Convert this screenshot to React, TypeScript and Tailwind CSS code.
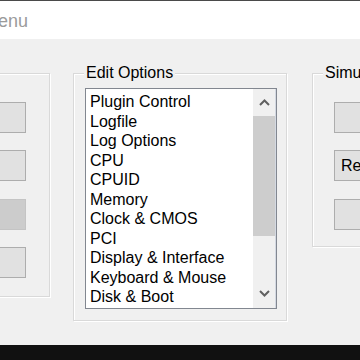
const editOptions = [
  'Plugin Control',
  'Logfile',
  'Log Options',
  'CPU',
  'CPUID',
  'Memory',
  'Clock & CMOS',
  'PCI',
  'Display & Interface',
  'Keyboard & Mouse',
  'Disk & Boot',
];

function WinButton({ label, pressed }: { label?: string; pressed?: boolean }) {
  return (
    <button
      className={
        'flex h-[31px] w-[60px] shrink-0 items-center justify-start border pl-[6px] text-[16px] leading-[19px] text-black ' +
        (pressed ? 'border-[#c4c4c4] bg-[#cccccc]' : 'border-[#adadad] bg-[#e1e1e1]')
      }
    >
      {label}
    </button>
  );
}

function GroupLabel({ children }: { children: string }) {
  return (
    <span className="absolute left-[10px] top-[-11px] bg-[#f0f0f0] px-[2px] leading-[19.5px] whitespace-nowrap">
      {children}
    </span>
  );
}

export default function App() {
  return (
    <div className="flex h-[360px] w-[360px] flex-col overflow-hidden bg-[#f0f0f0] font-['Liberation_Sans',Arial,sans-serif] text-[16px] text-black">
      <div className="h-px shrink-0 bg-[#4a4a4a]" />
      <div className="h-[38px] shrink-0 bg-white pt-[10px] text-[18px] leading-[20px] text-[#9b9b9b]">
        <span className="ml-[-17px]">Menu</span>
      </div>

      <div className="flex flex-1 items-start pt-[34px]">
        {/* left group, mostly off screen */}
        <div className="relative ml-[-30px] flex h-[224px] w-[80px] shrink-0 flex-col items-end border border-[#d9d9d9] pr-[23px] pt-[28px] shadow-[inset_1px_1px_0_#fff,1px_1px_0_#fff]">
          <WinButton />
          <div className="mt-[17px]">
            <WinButton />
          </div>
          <div className="mt-[18px]">
            <WinButton pressed />
          </div>
          <div className="mt-[17px]">
            <WinButton />
          </div>
        </div>

        {/* Edit Options */}
        <div className="relative ml-[23px] h-[248px] w-[214px] shrink-0 border border-[#d9d9d9] pl-[11px] pt-[14px] shadow-[inset_1px_1px_0_#fff,1px_1px_0_#fff]">
          <GroupLabel>Edit Options</GroupLabel>
          <div className="flex h-[221px] w-[192px] border border-[#828790] bg-white">
            <ul className="flex-1 overflow-hidden pl-[4px] pt-[3px] leading-[19.5px] whitespace-nowrap">
              {editOptions.map((item) => (
                <li key={item}>{item}</li>
              ))}
            </ul>
            <div className="flex w-[22px] shrink-0 flex-col bg-[#f0f0f0]">
              <div className="flex h-[27px] items-center justify-center">
                <svg width="11" height="7" viewBox="0 0 11 7">
                  <polyline points="1,6 5.5,1.5 10,6" fill="none" stroke="#606060" strokeWidth="2" />
                </svg>
              </div>
              <div className="h-[120px] bg-[#cdcdcd]" />
              <div className="flex-1" />
              <div className="flex h-[29px] items-center justify-center">
                <svg width="11" height="7" viewBox="0 0 11 7">
                  <polyline points="1,1 5.5,5.5 10,1" fill="none" stroke="#606060" strokeWidth="2" />
                </svg>
              </div>
            </div>
            <div className="w-px shrink-0 bg-[#d4d9e2]" />
          </div>
        </div>

        {/* Simulation */}
        <div className="relative ml-[25px] flex h-[174px] w-[80px] shrink-0 flex-col items-start border border-[#d9d9d9] pl-[21px] pt-[28px] shadow-[inset_1px_1px_0_#fff,1px_1px_0_#fff]">
          <GroupLabel>Simulation</GroupLabel>
          <WinButton />
          <div className="mt-[17px]">
            <WinButton label="Reset" />
          </div>
          <div className="mt-[18px]">
            <WinButton />
          </div>
        </div>
      </div>

      <div className="h-[15px] shrink-0 bg-[#111111]" />
    </div>
  );
}
